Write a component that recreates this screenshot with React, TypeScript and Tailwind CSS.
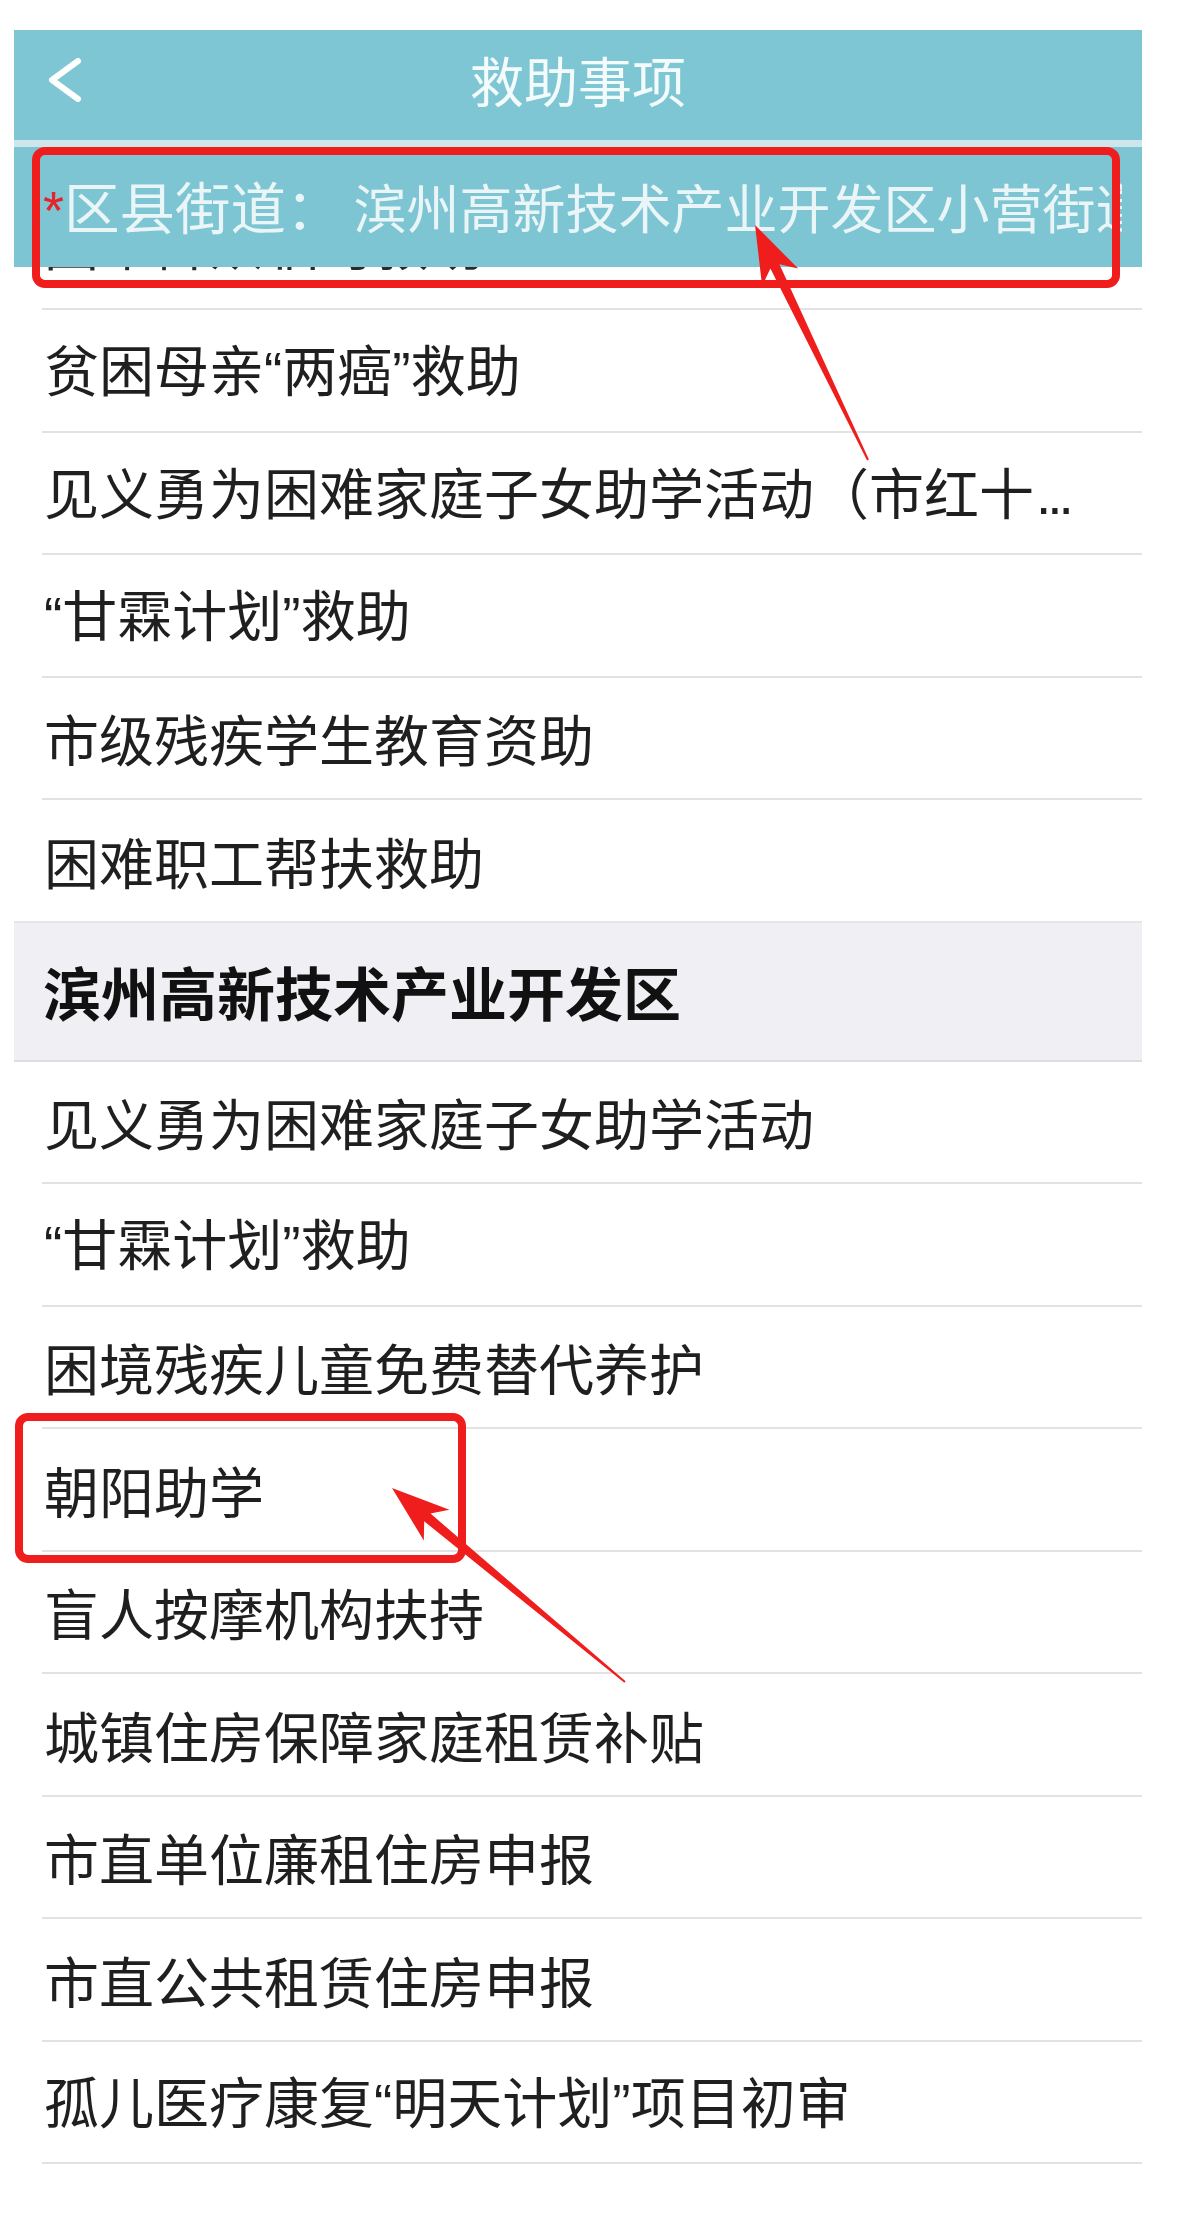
import { Fragment } from "react";

const FONT = "font-['Noto_Sans_CJK_SC','Noto_Sans',sans-serif]";

const topItems = [
  "贫困母亲“两癌”救助",
  "见义勇为困难家庭子女助学活动（市红十",
  "“甘霖计划”救助",
  "市级残疾学生教育资助",
  "困难职工帮扶救助",
];

const zoneItems = [
  "见义勇为困难家庭子女助学活动",
  "“甘霖计划”救助",
  "困境残疾儿童免费替代养护",
  "朝阳助学",
  "盲人按摩机构扶持",
  "城镇住房保障家庭租赁补贴",
  "市直单位廉租住房申报",
  "市直公共租赁住房申报",
  "孤儿医疗康复“明天计划”项目初审",
];

// curly quotes are narrow in the screenshot, so give them a latin font
function Label({ text }: { text: string }) {
  const parts = text.split(/([“”])/);
  return (
    <>
      {parts.map((p, i) =>
        p === "“" || p === "”" ? (
          <span key={i} className="font-['Liberation_Sans',sans-serif]">
            {p}
          </span>
        ) : (
          <Fragment key={i}>{p}</Fragment>
        ),
      )}
    </>
  );
}

function Row({ text, divider = true }: { text: string; divider?: boolean }) {
  const cut = text.endsWith("市红十");
  return (
    <div>
      <div className="h-[120.5px] flex items-center pl-[30px] text-[55px] leading-none text-[#1f1f1f] whitespace-nowrap">
        <span>
          <Label text={text} />
          {cut && <span className="font-['Liberation_Sans',sans-serif] tracking-[-4px] ml-[2px]">...</span>}
        </span>
      </div>
      {divider && <div className="h-[2px] ml-[28px] bg-[#e2e2e2]" />}
    </div>
  );
}

function arrowPoints(tx: number, ty: number, hx: number, hy: number) {
  const dx = hx - tx;
  const dy = hy - ty;
  const len = Math.hypot(dx, dy);
  const ux = dx / len;
  const uy = dy / len;
  const nx = -uy;
  const ny = ux;
  const headLen = 58;
  const neckBack = 46;
  const headW = 40;
  const neckW = 10;
  const tailW = 2;
  const bx = hx - ux * headLen;
  const by = hy - uy * headLen;
  const kx = hx - ux * neckBack;
  const ky = hy - uy * neckBack;
  const pts = [
    [tx + (nx * tailW) / 2, ty + (ny * tailW) / 2],
    [kx + (nx * neckW) / 2, ky + (ny * neckW) / 2],
    [bx + (nx * headW) / 2, by + (ny * headW) / 2],
    [hx, hy],
    [bx - (nx * headW) / 2, by - (ny * headW) / 2],
    [kx - (nx * neckW) / 2, ky - (ny * neckW) / 2],
    [tx - (nx * tailW) / 2, ty - (ny * tailW) / 2],
  ];
  return pts.map((p) => `${p[0].toFixed(1)},${p[1].toFixed(1)}`).join(" ");
}

export default function App() {
  return (
    <div className={`relative w-[1181px] h-[2238px] bg-white overflow-hidden ${FONT}`}>
      <div className="pt-[30px] pl-[14px]">
        <div className="w-[1128px]">
          {/* ── Nav bar ─────────────────────────────────────────── */}
          <div className="h-[110px] bg-[#7ec6d4] flex items-center pb-[10px]">
            <div className="w-[120px] pl-[34px] flex items-center">
              <svg width="34" height="44" viewBox="0 0 34 44" fill="none">
                <polyline
                  points="30,3 4,22 30,41"
                  stroke="#ffffff"
                  strokeWidth="6"
                  strokeLinecap="round"
                  strokeLinejoin="round"
                />
              </svg>
            </div>
            <div className="flex-1 text-center text-[54px] leading-none text-[#f4fbfc]">救助事项</div>
            <div className="w-[120px]" />
          </div>
          <div className="h-[7px] bg-[#cde6ec]" />

          {/* ── Sticky district row ─────────────────────────────── */}
          <div className="h-[120px] bg-[#7dc5d3] flex items-center pl-[29px] pr-[20px]">
            <div className="overflow-hidden whitespace-nowrap leading-none text-[#eaf5f8]">
              <span className="text-[#e5232a] text-[54px] font-['Liberation_Sans',sans-serif]">*</span>
              <span className="text-[55.5px]">区县街道：</span>
              <span className="text-[53px] ml-[12px]">滨州高新技术产业开发区小营街道</span>
            </div>
          </div>

          {/* row scrolled under the sticky header */}
          <div className="h-[41px] overflow-hidden">
            <div className="h-[120.5px] -mt-[86px] flex items-center pl-[30px] text-[55px] leading-none text-[#2a2a2a] whitespace-nowrap">
              困难群众临时救助
            </div>
          </div>
          <div className="h-[2px] ml-[28px] bg-[#e2e2e2]" />

          {topItems.map((t, i) => (
            <Row key={t} text={t} divider={i < topItems.length - 1} />
          ))}

          {/* ── Section header ──────────────────────────────────── */}
          <div className="h-[141px] bg-[#efeff4] border-t-2 border-b-2 border-t-[#e6e6ea] border-b-[#dcdce1] flex items-center pl-[29px]">
            <span className="text-[58px] leading-none font-bold text-[#111]">滨州高新技术产业开发区</span>
          </div>

          {zoneItems.map((t) => (
            <Row key={t} text={t} />
          ))}
        </div>
      </div>

      {/* ── Red annotations ───────────────────────────────────── */}
      <svg
        className="absolute left-0 top-0 pointer-events-none"
        width="1181"
        height="2238"
        viewBox="0 0 1181 2238"
      >
        <rect x="36" y="151" width="1080" height="133" rx="9" fill="none" stroke="#f01d1d" strokeWidth="8" />
        <rect x="19" y="1417" width="443" height="142" rx="9" fill="none" stroke="#f01d1d" strokeWidth="8" />
        <polygon points={arrowPoints(868, 460, 755, 225)} fill="#f01d1d" />
        <polygon points={arrowPoints(625, 1682, 392, 1488)} fill="#f01d1d" />
      </svg>
    </div>
  );
}
